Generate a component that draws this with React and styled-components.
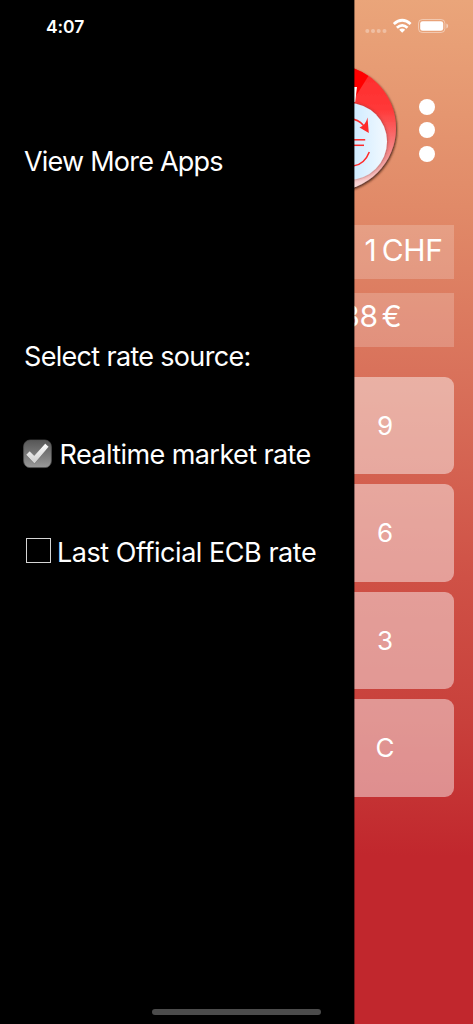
import React, { useState } from 'react'
import styled, { createGlobalStyle } from 'styled-components'

const GlobalStyle = createGlobalStyle`
  * {
    box-sizing: border-box;
  }
  body {
    margin: 0;
    background: #000;
    font-family: Inter, "Liberation Sans", sans-serif;
    color: #fff;
  }
`;

const Screen = styled.div`
  display: grid;
  grid-template-columns: 354px 1fr;
  height: 1024px;
  overflow: hidden;
  background: linear-gradient(181deg, #eaa57a 0%, #e18a68 20%, #d9725b 36%, #cf5146 56%, #c8403b 70%, #c1272d 83%);
`;

const Drawer = styled.aside`
  position: relative;
  z-index: 1;
  display: flex;
  flex-direction: column;
  background: #000;
  box-shadow: 1px 0 0 rgba(0, 0, 0, 0.4);
`;

const Clock = styled.div`
  height: 52px;
  padding-left: 46px;
  font-size: 17.5px;
  font-weight: 600;
  line-height: 53px;
  letter-spacing: -0.1px;
`;

const Menu = styled.nav`
  display: flex;
  flex: 1;
  flex-direction: column;
  padding: 60px 0 0 24px;
`;

const MenuItem = styled.div`
  display: flex;
  align-items: center;
  height: 98px;
  margin-bottom: ${(props) => props.$after || '0'};
  font-size: 27px;
  white-space: nowrap;
  letter-spacing: ${(props) => props.$spacing || '0'};
  cursor: pointer;
`;

const Checkbox = styled.svg`
  flex: none;
  width: 30px;
  height: 30px;
  margin: 0 6.5px 0 -1px;
`;

const EmptyBox = styled.span`
  flex: none;
  width: 25px;
  height: 25px;
  margin: -2px 6px 2px 2px;
  border: 1px solid #d5d5d5;
`;

const HomeBar = styled.div`
  width: 169px;
  height: 6px;
  margin: 0 0 9px 152px;
  border-radius: 3px;
  background: #4b4b4b;
`;

const Converter = styled.main`
  display: flex;
  flex-direction: column;
  min-width: 0;
  padding-right: 19px;
`;

const StatusIcons = styled.div`
  height: 60px;
  svg {
    display: block;
  }
`;

const Header = styled.header`
  display: flex;
  height: 165px;
`;

const MoreButton = styled.button`
  display: flex;
  flex-direction: column;
  align-items: center;
  gap: 7.5px;
  height: 63px;
  margin: 38.5px 0 0 14.5px;
  padding: 0;
  border: 0;
  background: none;
  span {
    width: 16px;
    height: 16px;
    border-radius: 50%;
    background: #fff;
  }
`;

const Field = styled.div`
  display: flex;
  justify-content: flex-end;
  height: 54px;
  margin-bottom: 14px;
  padding-right: ${(props) => props.$right};
  overflow: hidden;
  background: rgba(255, 255, 255, 0.2);
  font-size: 30px;
  line-height: ${(props) => props.$line};
  letter-spacing: ${(props) => props.$spacing || '0'};
  word-spacing: ${(props) => props.$gap};
  white-space: nowrap;
`;

const Keys = styled.div`
  display: grid;
  grid-auto-rows: 97.5px;
  gap: 10px;
  margin-top: 15.7px;
`;

const Key = styled.button`
  padding: 0 38px 0 0;
  border: 0;
  border-radius: 0 9px 9px 0;
  background: rgba(255, 255, 255, 0.45);
  color: #fff;
  font: 400 26px Inter, "Liberation Sans", sans-serif;
  text-align: center;
`;

const CheckedIcon = () => (
  <Checkbox viewBox="0 0 30 30">
    <defs>
      <linearGradient id="box" x1="0" y1="0" x2="0" y2="1">
        <stop offset="0" stopColor="#565656" />
        <stop offset="1" stopColor="#999" />
      </linearGradient>
      <linearGradient id="tick" x1="0" y1="0" x2="0" y2="1">
        <stop offset="0" stopColor="#fff" />
        <stop offset="1" stopColor="#ccc" />
      </linearGradient>
    </defs>
    <rect x="0.6" y="1" width="27.8" height="27.6" rx="6.5" fill="url(#box)" stroke="#555" strokeWidth="0.7" />
    <path d="M3 15.8 L6.6 12 L11.2 16.6 L22.2 4.4 L25.8 7.8 L11.5 24.8 Z" fill="url(#tick)" stroke="#555" strokeWidth="0.4" />
  </Checkbox>
)

const PhoneStatus = () => (
  <StatusIcons>
    <svg width="99" height="60" viewBox="354 0 99 60" fill="#fff">
      <g opacity="0.32">
        <circle cx="367.3" cy="31" r="2" />
        <circle cx="373" cy="31" r="2" />
        <circle cx="378.7" cy="31" r="2" />
        <circle cx="384.5" cy="31" r="2" />
      </g>
      <g fill="none" stroke="#fff" strokeWidth="2.8">
        <path d="M393.8 24 Q402.2 16.5 410.6 24" />
        <path d="M396.9 27.7 Q402.2 23 407.5 27.7" />
      </g>
      <path d="M399.2 29.7 Q402.2 27.3 405.2 29.7 L402.2 32.8 Z" />
      <rect x="418.5" y="19.5" width="26.4" height="13" rx="3.8" fill="none" stroke="#fff" strokeOpacity="0.42" />
      <rect x="420.2" y="21.2" width="23" height="9.6" rx="2.4" />
      <path d="M446.4 23.6 Q448.2 24.2 448.2 26 Q448.2 27.8 446.4 28.4 Z" opacity="0.5" />
    </svg>
  </StatusIcons>
)

const Logo = () => (
  <svg width="50" height="140" viewBox="354 60 50 140">
    <defs>
      <linearGradient id="ring" x1="0" y1="0" x2="0" y2="1">
        <stop offset="0" stopColor="#ff2a2a" />
        <stop offset="0.35" stopColor="#ff3838" />
        <stop offset="0.75" stopColor="#f49a9a" />
        <stop offset="1" stopColor="#fbe4e4" />
      </linearGradient>
      <linearGradient id="coin" x1="0" y1="0" x2="1" y2="0">
        <stop offset="0.5" stopColor="#cbe9ff" />
        <stop offset="1" stopColor="#f2f9ff" />
      </linearGradient>
      <filter id="shade" x="-20%" y="-20%" width="140%" height="140%">
        <feDropShadow dx="1" dy="1.5" stdDeviation="1" floodColor="#3a1510" floodOpacity="0.85" />
      </filter>
      <filter id="coinShade" x="-20%" y="-20%" width="140%" height="140%">
        <feDropShadow dx="0.5" dy="0" stdDeviation="1.8" floodColor="#7a2a2a" floodOpacity="0.6" />
      </filter>
    </defs>
    <circle cx="333" cy="128" r="63" fill="url(#ring)" filter="url(#shade)" />
    <path d="M333 65 A63 63 0 0 1 368.4 75.9 L354 99 L333 99 Z" fill="#f00" />
    <path d="M353 87 L357 87 L355.2 102 L353 102 Z" fill="#fff" />
    <circle cx="348.5" cy="141.5" r="38.5" fill="url(#coin)" filter="url(#coinShade)" />
    <g fill="none" stroke="#ff2a2a" strokeWidth="1.5">
      <path d="M353 119.2 Q361 120.5 365.5 128.5" />
      <path d="M353 139.8 H365.2" />
      <path d="M353 145.3 H364" />
      <path d="M353 166 Q364.5 164.5 369.3 152" />
    </g>
    <path d="M367.5 117.5 L368.8 133 L359.5 127.5 Q365.5 125.5 367.5 117.5 Z" fill="#ff2a2a" />
  </svg>
)

const App = () => {
  const [source, setSource] = useState('realtime')

  return (
    <>
      <GlobalStyle />
      <Screen>
        <Drawer>
          <Clock>4:07</Clock>
          <Menu>
            <MenuItem $after="97px" $spacing="-0.78px">View More Apps</MenuItem>
            <MenuItem $spacing="-0.68px">Select rate source:</MenuItem>
            <MenuItem $spacing="-0.58px" onClick={() => setSource('realtime')}>
              {source === 'realtime' ? <CheckedIcon /> : <EmptyBox />}
              Realtime market rate
            </MenuItem>
            <MenuItem $spacing="-0.46px" onClick={() => setSource('ecb')}>
              {source === 'ecb' ? <CheckedIcon /> : <EmptyBox />}
              Last Official ECB rate
            </MenuItem>
          </Menu>
          <HomeBar />
        </Drawer>
        <Converter>
          <PhoneStatus />
          <Header>
            <Logo />
            <MoreButton aria-label="More">
              <span />
              <span />
              <span />
            </MoreButton>
          </Header>
          <Field $right="11.5px" $line="50px" $spacing="-0.4px" $gap="-2.5px">1 CHF</Field>
          <Field $right="52.5px" $line="47px" $spacing="-0.2px" $gap="-4.5px">38 €</Field>
          <Keys>
            {['9', '6', '3', 'C'].map((key) => (
              <Key key={key}>{key}</Key>
            ))}
          </Keys>
        </Converter>
      </Screen>
    </>
  )
}

export default App
